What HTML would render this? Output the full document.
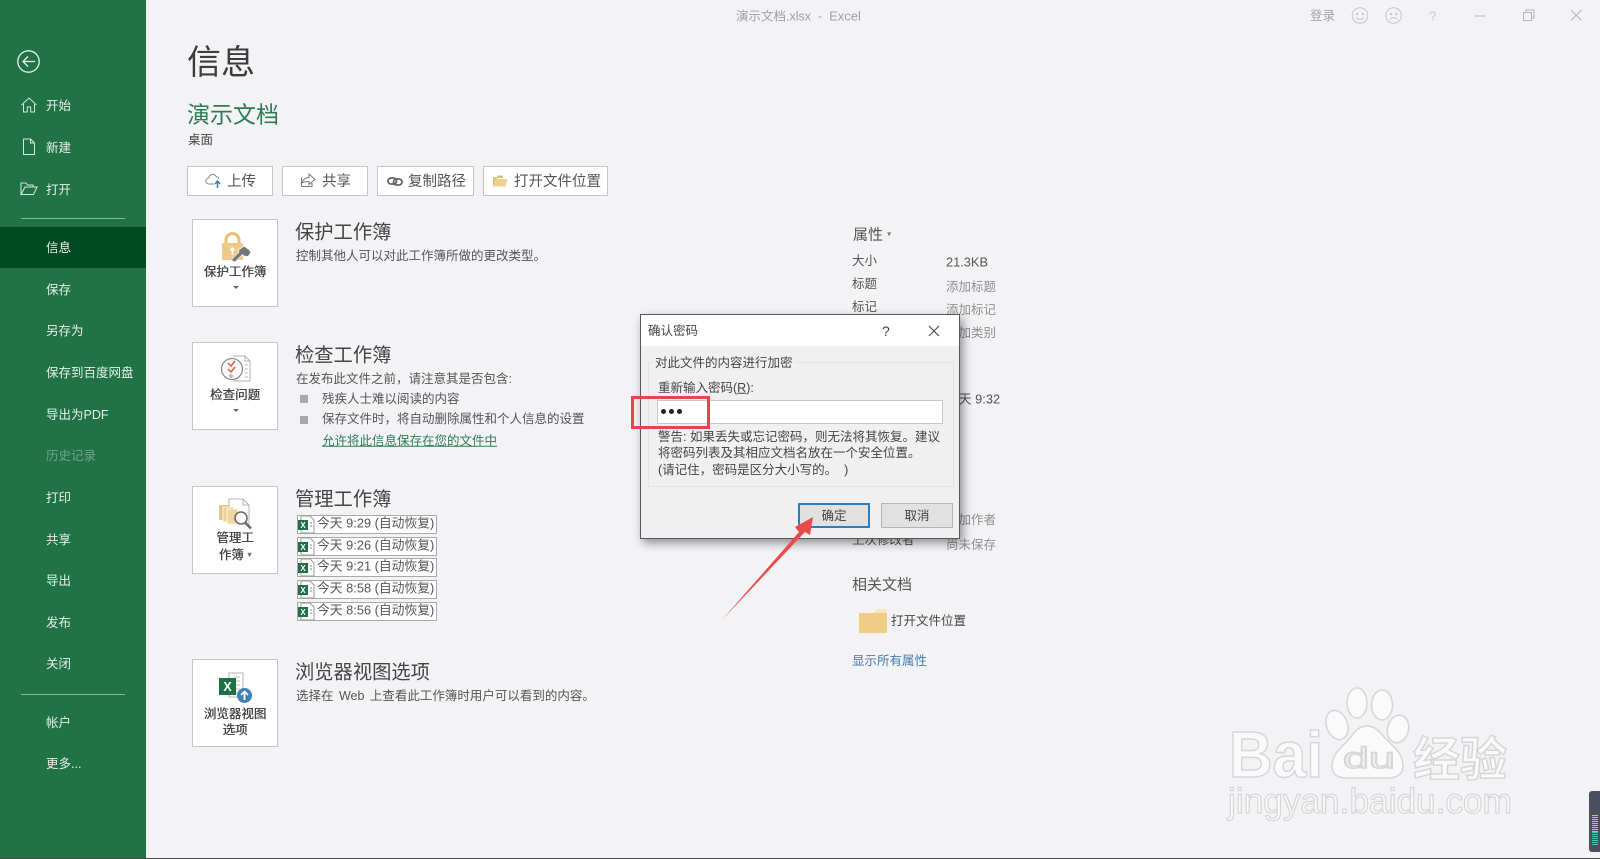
<!DOCTYPE html>
<html lang="zh-CN">
<head>
<meta charset="utf-8">
<title>演示文档.xlsx - Excel</title>
<style>
html{margin:0;padding:0;width:1600px;height:859px;overflow:hidden;background:#f3f2f5;}
body{margin:0;padding:0;width:1600px;height:859px;overflow:hidden;background:#f3f2f5;position:relative;font-family:"Liberation Sans","Noto Sans CJK SC",sans-serif;color:#444;filter:blur(.3px);}
.t{position:absolute;white-space:nowrap;line-height:1;transform:translateY(-50%);}
.side{position:absolute;left:0;top:0;width:146px;height:859px;background:#217346;}
.side .t{left:46px;color:#e4efe8;font-size:12.5px;margin-top:1px;}
.sep{position:absolute;left:21px;width:104px;height:1px;background:#8cb69e;}
.active{position:absolute;left:0;top:227px;width:146px;height:41px;background:#024b1e;}
.btn{position:absolute;top:166px;height:28px;background:#fff;border:1px solid #c6c6c6;}
.btn span{position:absolute;top:calc(50% + 1px);transform:translateY(-50%);font-size:14.5px;color:#555;white-space:nowrap;line-height:1;}
.big{position:absolute;left:192px;width:84px;height:86px;background:#fff;border:1px solid #c6c6c6;}
.big b{position:absolute;left:0;width:84px;text-align:center;font-size:12.5px;line-height:15.5px;font-weight:400;color:#444;text-shadow:.35px 0 0 #444;}
.h{left:295px;font-size:19.3px;color:#444;}
.d{font-size:12.5px;color:#555;}
.row{position:absolute;left:297px;width:138px;height:17px;background:#fff;border:1px solid #a9a9a9;}
.row span{position:absolute;left:19px;top:calc(50% - 1px);transform:translateY(-50%);font-size:12.8px;color:#555;white-space:nowrap;line-height:1;}
.row svg{position:absolute;left:-1px;top:-1px;}
.bul{position:absolute;left:300px;width:8px;height:8px;background:#a8a8a8;}
.p{font-size:12.5px;color:#555;margin-top:1px;}
.g{font-size:12.5px;color:#909090;margin-top:1px;}
.dlg{position:absolute;left:640px;top:314px;width:318px;height:223px;background:#f0f0f0;border:1px solid #55585c;box-shadow:3px 4px 9px rgba(0,0,0,.42);}
.dlg .t{color:#444;font-size:12.5px;}
.dbtn{position:absolute;top:188px;height:25px;box-sizing:border-box;background:#e1e1e1;border:1px solid #b5b5b5;font-size:12.5px;line-height:25px;text-align:center;color:#444;}
.abs{position:absolute;}
</style>
</head>
<body>

<!-- Sidebar -->
<div class="side">
  <div class="active"></div>
  <svg class="abs" style="left:16px;top:49px" width="26" height="26" viewBox="0 0 26 26" fill="none" stroke="#e6f1ea" stroke-width="1.3"><circle cx="12.5" cy="12.5" r="10.7"/><path d="M19 12.5H7M12 7.5l-5 5 5 5"/></svg>
  <svg class="abs" style="left:20px;top:96px" width="18" height="18" viewBox="0 0 18 18" fill="none" stroke="#d7e7dd" stroke-width="1"><path d="M1.5 9L9 2l7.5 7M3.5 8v8h3.8v-5h3.4v5h3.800V8"/></svg>
  <svg class="abs" style="left:22px;top:138px" width="14" height="18" viewBox="0 0 14 18" fill="none" stroke="#d7e7dd" stroke-width="1"><path d="M1.5 1h7l4 4v11.5h-11zM8.500 1v4h4"/></svg>
  <svg class="abs" style="left:20px;top:181px" width="18" height="15" viewBox="0 0 18 15" fill="none" stroke="#d7e7dd" stroke-width="1"><path d="M1 13.500V2h5l1.500 2H13v2M1 13.500L5 6h12l-3.500 7.500z"/></svg>
  <span class="t" style="top:105px">开始</span>
  <span class="t" style="top:147px">新建</span>
  <span class="t" style="top:189px">打开</span>
  <div class="sep" style="top:218px"></div>
  <span class="t" style="top:247px">信息</span>
  <span class="t" style="top:289px">保存</span>
  <span class="t" style="top:330px">另存为</span>
  <span class="t" style="top:372px">保存到百度网盘</span>
  <span class="t" style="top:414px">导出为PDF</span>
  <span class="t" style="top:455px;color:#6fa587">历史记录</span>
  <span class="t" style="top:497px">打印</span>
  <span class="t" style="top:539px">共享</span>
  <span class="t" style="top:580px">导出</span>
  <span class="t" style="top:622px">发布</span>
  <span class="t" style="top:663px">关闭</span>
  <div class="sep" style="top:694px"></div>
  <span class="t" style="top:722px">帐户</span>
  <span class="t" style="top:763px">更多...</span>
</div>

<!-- Title bar -->
<span class="t" style="left:736px;top:16px;font-size:12.5px;color:#a0a0a0">演示文档.xlsx&nbsp; -&nbsp; <span style="font-size:13px">Excel</span></span>
<span class="t" style="left:1310px;top:16px;font-size:12.5px;color:#a5a5a5">登录</span>
<svg class="abs" style="left:1350px;top:6px" width="240" height="20" viewBox="0 0 240 20" fill="none" stroke="#c6c6c6" stroke-width="1">
  <circle cx="10" cy="9.5" r="7.8"/><circle cx="7.3" cy="8" r=".7" fill="#c6c6c6"/><circle cx="12.7" cy="8" r=".7" fill="#c6c6c6"/><path d="M6.500 11.500c1.500 2.500 5.500 2.500 7 0"/>
  <circle cx="43.500" cy="9.5" r="7.8"/><circle cx="40.800" cy="8" r=".7" fill="#c6c6c6"/><circle cx="46.200" cy="8" r=".7" fill="#c6c6c6"/><path d="M40 13.500c1.500-2.500 5.500-2.500 7 0"/>
  <path d="M124.500 10h11" stroke="#bbb"/>
  <path d="M173.500 6.500h8v8h-8zM176 6.500V4h8v8h-2.500" stroke="#b5b5b5"/>
  <path d="M221 4l10.500 10.500M231.500 4L221 14.500" stroke="#b5b5b5"/>
</svg>
<span class="t" style="left:1429px;top:16px;font-size:13px;color:#c9c9c9">?</span>

<!-- Header -->
<span class="t" style="left:187px;top:63px;font-size:34px;color:#3c3c3c">信息</span>
<span class="t" style="left:187px;top:115px;font-size:23px;color:#2f7c54">演示文档</span>
<span class="t" style="left:188px;top:140px;font-size:12.5px;color:#444">桌面</span>

<!-- Top buttons -->
<div class="btn" style="left:187px;width:84px">
  <svg class="abs" style="left:17px;top:6px" width="18" height="16" viewBox="0 0 18 16" fill="none"><path d="M9 11H4a3 3 0 0 1-.3-6 4 4 0 0 1 7.600-1.200A2.800 2.800 0 0 1 14 6" stroke="#8a8a8a"/><path d="M12.500 15V9M10 11l2.500-3 2.500 3" stroke="#3d7fb5" stroke-width="1.500"/></svg>
  <span style="left:39px">上传</span>
</div>
<div class="btn" style="left:282px;width:84px">
  <svg class="abs" style="left:17px;top:5px" width="17" height="16" viewBox="0 0 17 16" fill="none" stroke="#777"><path d="M1.500 5.500v9h10.500V11M1.500 11c2-4 5-5.500 7.500-5.500V2l6 5.500-6 5V9.500c-3 0-5.500.500-7.500 1.500z"/></svg>
  <span style="left:39px">共享</span>
</div>
<div class="btn" style="left:377px;width:95px">
  <svg class="abs" style="left:9px;top:9px" width="16" height="11" viewBox="0 0 16 11" fill="none" stroke="#666" stroke-width="1.800"><rect x="1" y="2" width="8.500" height="6" rx="3"/><rect x="6.500" y="3" width="8.500" height="6" rx="3"/></svg>
  <span style="left:30px">复制路径</span>
</div>
<div class="btn" style="left:483px;width:123px">
  <svg class="abs" style="left:8px;top:7px" width="16" height="13" viewBox="0 0 16 13"><path d="M1 12V3h4l1-1.500h5V4H5z" fill="#e0be82"/><path d="M1 12.500L3.500 5H15.500l-2 7.500z" fill="#f0cf8e"/></svg>
  <span style="left:30px">打开文件位置</span>
</div>

<!-- Big buttons -->
<div class="big" style="top:219px">
  <svg class="abs" style="left:27px;top:11px" width="34" height="34" viewBox="0 0 34 34">
    <path d="M6 13V9a6.500 6.500 0 0 1 13 0v4" fill="none" stroke="#e8bf75" stroke-width="3"/>
    <rect x="2" y="12" width="21" height="17" rx="1.500" fill="#efc985"/>
    <circle cx="12.500" cy="18.500" r="2" fill="#fff"/><rect x="11.700" y="19" width="1.600" height="5" fill="#fff"/>
    <path d="M24 15l5 3.500 2 3-3 4-4-.5-1.500-1.500L15 31l-3-1 0-2 7-7-.5-2z" fill="#75757a" stroke="#f5f5f5" stroke-width=".8"/>
  </svg>
  <b style="top:45px">保护工作簿</b>
  <div class="abs" style="left:40px;top:66px;border:3px solid transparent;border-top:3px solid #666;"></div>
</div>
<div class="big" style="top:342px">
  <svg class="abs" style="left:27px;top:12px" width="32" height="30" viewBox="0 0 32 30" fill="none">
    <path d="M13 1h12l5 5v20H13" stroke="#b0b0b0" fill="#fff"/><path d="M25 1v5h5" stroke="#b0b0b0"/>
    <circle cx="12" cy="14" r="10.500" stroke="#8a8a8a" stroke-width="1.200" fill="#fafafa"/>
    <path d="M8 8l3 3 4-5M8 14l3 3 4-5" stroke="#d9603b" stroke-width="1.500"/><circle cx="11" cy="21" r="1.200" stroke="#999"/>
    <path d="M25 10h3M25 14h3M25 18h3M25 22h3" stroke="#bbb"/>
  </svg>
  <b style="top:45px">检查问题</b>
  <div class="abs" style="left:40px;top:66px;border:3px solid transparent;border-top:3px solid #666;"></div>
</div>
<div class="big" style="top:486px">
  <svg class="abs" style="left:25px;top:11px" width="36" height="32" viewBox="0 0 36 32" fill="none">
    <path d="M11 1h14l6 6v19H11z" fill="#fff" stroke="#b5b5b5"/><path d="M25 1v6h6" stroke="#b5b5b5"/>
    <rect x="1" y="7" width="11" height="15" fill="#e2c68d"/><rect x="5" y="9" width="11" height="15" fill="#ecd19a" stroke="#fff" stroke-width=".7"/><rect x="9" y="11" width="11" height="15" fill="#f0d69f" stroke="#fff" stroke-width=".7"/>
    <circle cx="23" cy="20" r="6" fill="#fbfbfb" stroke="#666" stroke-width="1.500"/><path d="M27 24.500l6 6" stroke="#666" stroke-width="2.500"/>
  </svg>
  <b style="top:44px">管理工<br>作簿 <span style="color:#777;font-size:8px;vertical-align:2px">▾</span></b>
</div>
<div class="big" style="top:659px">
  <svg class="abs" style="left:26px;top:12px" width="34" height="32" viewBox="0 0 34 32" fill="none">
    <path d="M10 1h14v24H10z" fill="#fff" stroke="#b5b5b5"/><path d="M15 5h6M15 9h6M15 13h6M15 17h6M15 21h6" stroke="#bbb"/>
    <rect x="0" y="6" width="17" height="17" fill="#1e7145"/>
    <text x="8.500" y="19" text-anchor="middle" font-family="Liberation Sans" font-weight="bold" font-size="12.500" fill="#fff">X</text>
    <circle cx="25.500" cy="23.500" r="7.500" fill="#3e82b4"/><path d="M25.500 28v-8M22 23l3.500-3.500L29 23" stroke="#fff" stroke-width="1.800"/>
  </svg>
  <b style="top:47px">浏览器视图<br>选项</b>
</div>

<!-- Section text -->
<span class="t h" style="top:233px">保护工作簿</span>
<span class="t d" style="left:296px;top:256px">控制其他人可以对此工作簿所做的更改类型。</span>

<span class="t h" style="top:356px">检查工作簿</span>
<span class="t d" style="left:296px;top:379px">在发布此文件之前，请注意其是否包含:</span>
<div class="bul" style="top:395px"></div>
<span class="t d" style="left:322px;top:399px">残疾人士难以阅读的内容</span>
<div class="bul" style="top:416px"></div>
<span class="t d" style="left:322px;top:419px">保存文件时，将自动删除属性和个人信息的设置</span>
<span class="t d" style="left:322px;top:441px;color:#2f7c54;text-decoration:underline">允许将此信息保存在您的文件中</span>

<span class="t h" style="top:500px">管理工作簿</span>
<div class="row" style="top:515px"><svg width="18" height="19" viewBox="0 0 18 19"><path d="M4 1h9l4 4v13H4z" fill="#fff" stroke="#999"/><rect x="1" y="5" width="10" height="10" fill="#1e7145"/><text x="6" y="13" text-anchor="middle" font-family="Liberation Sans" font-weight="bold" font-size="8" fill="#fff">X</text><path d="M13 8h2M13 11h2" stroke="#6a9a7d"/></svg><span>今天 9:29 (自动恢复)</span></div>
<div class="row" style="top:537px"><svg width="18" height="19" viewBox="0 0 18 19"><path d="M4 1h9l4 4v13H4z" fill="#fff" stroke="#999"/><rect x="1" y="5" width="10" height="10" fill="#1e7145"/><text x="6" y="13" text-anchor="middle" font-family="Liberation Sans" font-weight="bold" font-size="8" fill="#fff">X</text><path d="M13 8h2M13 11h2" stroke="#6a9a7d"/></svg><span>今天 9:26 (自动恢复)</span></div>
<div class="row" style="top:558px"><svg width="18" height="19" viewBox="0 0 18 19"><path d="M4 1h9l4 4v13H4z" fill="#fff" stroke="#999"/><rect x="1" y="5" width="10" height="10" fill="#1e7145"/><text x="6" y="13" text-anchor="middle" font-family="Liberation Sans" font-weight="bold" font-size="8" fill="#fff">X</text><path d="M13 8h2M13 11h2" stroke="#6a9a7d"/></svg><span>今天 9:21 (自动恢复)</span></div>
<div class="row" style="top:580px"><svg width="18" height="19" viewBox="0 0 18 19"><path d="M4 1h9l4 4v13H4z" fill="#fff" stroke="#999"/><rect x="1" y="5" width="10" height="10" fill="#1e7145"/><text x="6" y="13" text-anchor="middle" font-family="Liberation Sans" font-weight="bold" font-size="8" fill="#fff">X</text><path d="M13 8h2M13 11h2" stroke="#6a9a7d"/></svg><span>今天 8:58 (自动恢复)</span></div>
<div class="row" style="top:602px"><svg width="18" height="19" viewBox="0 0 18 19"><path d="M4 1h9l4 4v13H4z" fill="#fff" stroke="#999"/><rect x="1" y="5" width="10" height="10" fill="#1e7145"/><text x="6" y="13" text-anchor="middle" font-family="Liberation Sans" font-weight="bold" font-size="8" fill="#fff">X</text><path d="M13 8h2M13 11h2" stroke="#6a9a7d"/></svg><span>今天 8:56 (自动恢复)</span></div>

<span class="t h" style="top:673px">浏览器视图选项</span>
<span class="t d" style="left:296px;top:696px;word-spacing:2px">选择在 Web 上查看此工作簿时用户可以看到的内容。</span>

<!-- Properties -->
<span class="t" style="left:853px;top:235px;font-size:15px;color:#555">属性 <span style="font-size:8px;vertical-align:3px;color:#777">▾</span></span>
<span class="t p" style="left:852px;top:260px">大小</span>
<span class="t p" style="left:946px;top:262px;font-size:12.8px">21.3KB</span>
<span class="t p" style="left:852px;top:283px">标题</span>
<span class="t g" style="left:946px;top:286px">添加标题</span>
<span class="t p" style="left:852px;top:306px">标记</span>
<span class="t g" style="left:946px;top:309px">添加标记</span>
<span class="t g" style="left:946px;top:332px">添加类别</span>
<span class="t p" style="left:946px;top:399px;font-size:12.8px">今天 9:32</span>
<span class="t g" style="left:946px;top:519px">添加作者</span>
<span class="t p" style="left:852px;top:539px">上次修改者</span>
<span class="t g" style="left:946px;top:544px">尚未保存</span>
<span class="t" style="left:852px;top:585px;font-size:15px;color:#555">相关文档</span>
<svg class="abs" style="left:859px;top:608px" width="28" height="26" viewBox="0 0 28 26"><path d="M0 5h14l5-4h9v24H0z" fill="#f0cc85"/><path d="M19 1l-5 4h14V1z" fill="#f8e6c2"/></svg>
<span class="t p" style="left:891px;top:620px;color:#444">打开文件位置</span>
<span class="t p" style="left:852px;top:660px;color:#3f7dad">显示所有属性</span>

<!-- Dialog -->
<div class="dlg">
  <div class="abs" style="left:0;top:0;width:318px;height:31px;background:#fff"></div>
  <span class="t" style="left:7px;top:16px">确认密码</span>
  <span class="t" style="left:241px;top:16px;font-size:14px">?</span>
  <svg class="abs" style="left:287px;top:10px" width="12" height="12" viewBox="0 0 12 12" fill="none" stroke="#444"><path d="M1 1l10 10M11 1L1 11"/></svg>
  <div class="abs" style="left:7px;top:47px;width:304px;height:123px;border:1px solid #e4e4e4;box-sizing:content-box"></div>
  <span class="t" style="left:12px;top:48px;background:#f0f0f0;padding:0 2px">对此文件的内容进行加密</span>
  <span class="t" style="left:17px;top:73px">重新输入密码(<u>R</u>):</span>
  <div class="abs" style="left:16px;top:85px;width:284px;height:22px;background:#fff;border:1px solid #c8c8c8"></div>
  <div class="abs" style="left:20px;top:94px;width:5px;height:5px;border-radius:50%;background:#222;box-shadow:8px 0 0 #222,16px 0 0 #222"></div>
  <span class="t" style="left:17px;top:122px">警告: 如果丢失或忘记密码，则无法将其恢复。建议</span>
  <span class="t" style="left:17px;top:138px">将密码列表及其相应文档名放在一个安全位置。</span>
  <span class="t" style="left:17px;top:155px">(请记住，密码是区分大小写的。&nbsp;&nbsp;)</span>
  <div class="dbtn" style="left:157px;width:72px;border:2px solid #2a80bd;line-height:23px">确定</div>
  <div class="dbtn" style="left:240px;width:72px">取消</div>
</div>

<!-- Annotations -->
<div class="abs" style="left:631px;top:396px;width:73px;height:27px;border:3px solid #e4474a"></div>
<svg class="abs" style="left:715px;top:505px" width="110" height="120" viewBox="0 0 110 120"><path d="M7 115L84 27l-4-5L98 12l-3 18-5-3z" fill="#ea4a4a"/></svg>

<!-- Watermark -->
<svg class="abs" style="left:1220px;top:680px" width="310" height="150" viewBox="0 0 310 150">
  <g fill="#fafafb" stroke="#d6d6d8" stroke-width="1.500">
    <text x="9" y="97" font-family="Liberation Sans" font-weight="bold" font-size="65" textLength="94" lengthAdjust="spacingAndGlyphs">Bai</text>
    <ellipse cx="137" cy="23" rx="10" ry="15"/>
    <ellipse cx="162" cy="25" rx="10.500" ry="15"/>
    <ellipse cx="117" cy="45" rx="10.500" ry="15" transform="rotate(-20 117 45)"/>
    <ellipse cx="178" cy="49" rx="10.500" ry="14" transform="rotate(15 178 49)"/>
    <path d="M112 86c0-14 12-20 18-28 5-7 9-12 17-12s13 6 18 12c7 8 18 14 18 28 0 9-7 12-16 12h-39c-10 0-16-3-16-12z"/>
    <text x="123" y="88" font-family="Liberation Sans" font-size="30" fill="#f3f2f5" textLength="52" lengthAdjust="spacingAndGlyphs">du</text>
    <text x="193" y="96" font-family="Liberation Sans,Noto Sans CJK SC,sans-serif" font-weight="bold" font-size="47" textLength="94" lengthAdjust="spacingAndGlyphs">经验</text>
    <text x="8" y="133" font-family="Liberation Sans" font-size="35" stroke-width="1.200" textLength="284" lengthAdjust="spacingAndGlyphs">jingyan.baidu.com</text>
  </g>
</svg>

<!-- Bottom widget and line -->
<div class="abs" style="left:1589px;top:791px;width:11px;height:61px;background:#4a4f5e;border-radius:3px 0 0 3px"></div>
<div class="abs" style="left:1592px;top:815px;width:6px;height:17px;background:repeating-linear-gradient(#c9c46a 0 1px,#4a4f5e 1px 2px)"></div>
<div class="abs" style="left:1592px;top:832px;width:6px;height:14px;background:repeating-linear-gradient(#4fc0b0 0 1px,#4a4f5e 1px 2px)"></div>
<div class="abs" style="left:0;top:858px;width:1600px;height:1px;background:#4a4a44"></div>

</body>
</html>
